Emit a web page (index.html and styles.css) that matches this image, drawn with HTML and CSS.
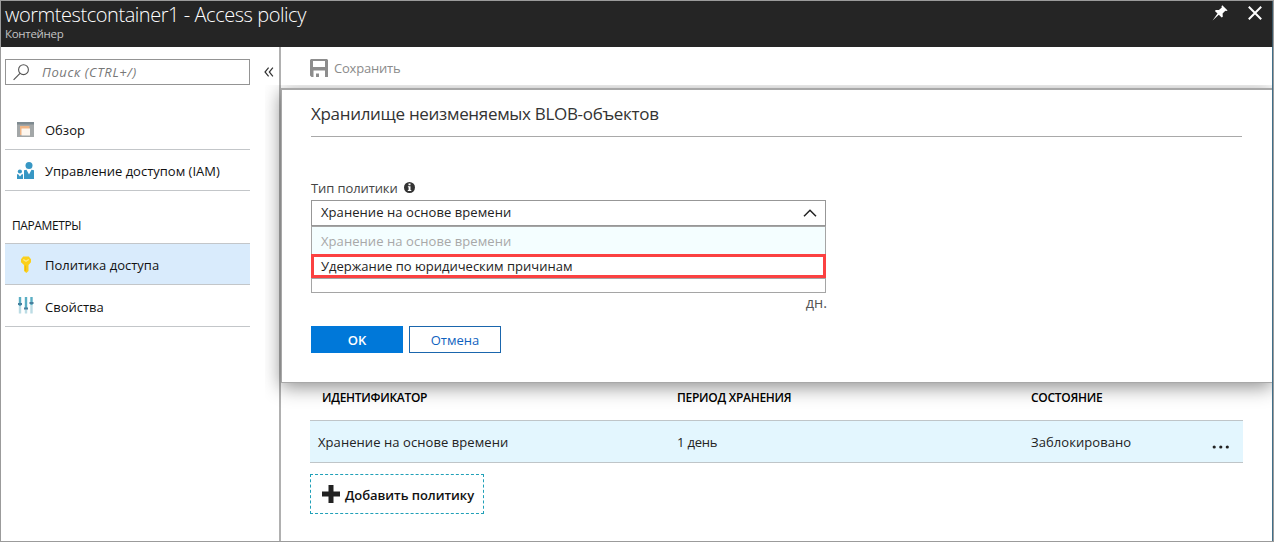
FILE: index.html
```
<!DOCTYPE html>
<html lang="ru">
<head>
<meta charset="utf-8">
<title>wormtestcontainer1 - Access policy</title>
<link rel="stylesheet" href="styles.css">
</head>
<body>
<div class="blade">
  <header class="blade-header">
    <div class="heading">
      <h1 class="blade-title">wormtestcontainer1 - Access policy</h1>
      <div class="blade-subtitle">Контейнер</div>
    </div>
    <div class="window-actions">
      <svg class="pin" width="16" height="16" viewBox="0 0 16 16"><path fill="#fff" d="M10.3 .3 15.6 5.4 14.3 6 13.3 5.7 10.6 8.5 10.8 11.8 9.7 12.4 6.8 9.8 .6 15.4 5.5 8.5 2.9 5.9 3.8 4.9 6.9 5.1 9.8 2.4 9.5 1.2Z"/></svg>
      <svg class="close" width="14" height="14" viewBox="0 0 14 14"><path d="M.8 .8 13.2 13.2M13.2 .8 .8 13.2" stroke="#fff" stroke-width="2" fill="none"/></svg>
    </div>
  </header>
  <div class="blade-body">
    <nav class="sidebar">
      <div class="search-row">
        <div class="search">
          <svg width="17" height="17" viewBox="0 0 17 17"><circle cx="10.5" cy="5.7" r="4.9" fill="none" stroke="#555" stroke-width="1.1"/><path d="M7 9.3 .6 15.8" stroke="#555" stroke-width="1.2"/></svg>
          <span>Поиск (CTRL+/)</span>
        </div>
        <svg class="collapse" width="10" height="10" viewBox="0 0 10 10"><path d="M4.6 .6 1 5l3.6 4.4M8.9 .6 5.3 5l3.6 4.4" stroke="#333" stroke-width="1.2" fill="none"/></svg>
      </div>
      <ul class="menu menu-top">
        <li class="menu-item">
          <svg width="17" height="15" viewBox="0 0 17 15"><path fill="#a3a7a8" d="M0 0h17v15H0z"/><path fill="#7e8a90" d="M0 0h17v2.5H0z"/><path fill="#f0b585" d="M3 4h9.500v9H3z"/><path fill="#fdf6ee" d="M4.500 6.500H13V13.500H4.500z"/></svg>
          <span>Обзор</span>
        </li>
        <li class="menu-item">
          <svg width="17" height="17" viewBox="0 0 17 17"><g fill="#3797c4"><circle cx="12" cy="3.600" r="3.500"/><path d="M7 8.200 9.500 7.800 12 12.500l2.500-4.700L17 8.200V17H7z"/><circle cx="2.900" cy="9.500" r="2.100"/><path d="M0 12.200h1.200l1.800 2.400 1.800-2.400H6V17H0z"/></g></svg>
          <span>Управление доступом (IAM)</span>
        </li>
      </ul>
      <div class="menu-caption">ПАРАМЕТРЫ</div>
      <ul class="menu menu-settings">
        <li class="menu-item selected">
          <svg width="17" height="17" viewBox="0 0 17 17"><path fill="#fbd01c" d="M6.200 .5h5.600l2.200 2.700v3L11.500 9v6L9.300 17 7 15V9L4 6.200v-3z"/><path d="M6.300 3.500 9 5.300l2.800-1.800" fill="none" stroke="#fae98d" stroke-width="1.300"/><path d="M8.600 9.500V15" stroke="#e2ae16" stroke-width=".8"/></svg>
          <span>Политика доступа</span>
        </li>
        <li class="menu-item">
          <svg width="17" height="17" viewBox="0 0 17 17"><g stroke-width="2.400"><path d="M3 0v9M9 0v12M14.500 0v8" stroke="#5aaec4"/><path d="M3 9v7.500M9 12v4.500M14.500 8v8.500" stroke="#bcdce4"/></g><path d="M1 7h4M7 11.500h4M12.500 6h4" stroke="#477f9c" stroke-width="2"/></svg>
          <span>Свойства</span>
        </li>
      </ul>
    </nav>
    <main class="content">
      <div class="toolbar">
        <svg width="18" height="18" viewBox="0 0 18 18"><path fill="#8d8d8d" fill-rule="evenodd" d="M1 0h16l1 1v17h-3v-6.500H3.500V18H1.500L0 16.500V1zM3 2v6h12V2z"/><path fill="#8d8d8d" d="M6 14.500h3V18H6z"/></svg>
        <span class="save">Сохранить</span>
      </div>
      <section class="dialog">
        <h2 class="dialog-title">Хранилище неизменяемых BLOB-объектов</h2>
        <div class="field-label">
          <span>Тип политики</span>
          <svg width="11" height="11" viewBox="0 0 11 11"><circle cx="5.500" cy="5.500" r="5.500" fill="#333"/><path d="M4.500 1.500h2v1.700h-2zM3.900 4.200h2.600v3.900h.8v1H3.800v-1h.8V5.200h-.7z" fill="#fff"/></svg>
        </div>
        <div class="select">
          <span class="value">Хранение на основе времени</span>
          <svg width="14" height="8" viewBox="0 0 14 8"><path d="M1 7.200 7 1.200l6 6" fill="none" stroke="#222" stroke-width="1.500"/></svg>
        </div>
        <div class="options">
          <div class="option disabled"><span class="value">Хранение на основе времени</span></div>
          <div class="option highlighted"><span>Удержание по юридическим причинам</span></div>
          <div class="option-rest"></div>
        </div>
        <div class="unit">дн.</div>
        <div class="buttons">
          <button class="btn primary">OK</button>
          <button class="btn">Отмена</button>
        </div>
      </section>
      <div class="policies">
        <div class="policy-row policy-head">
          <div class="c-id">ИДЕНТИФИКАТОР</div>
          <div>ПЕРИОД ХРАНЕНИЯ</div>
          <div>СОСТОЯНИЕ</div>
        </div>
        <div class="policy-row policy-data">
          <div class="value">Хранение на основе времени</div>
          <div class="day">1 день</div>
          <div class="value">Заблокировано</div>
          <svg width="18" height="4" viewBox="0 0 18 4"><g fill="#222"><circle cx="2.200" cy="2" r="1.600"/><circle cx="8.800" cy="2" r="1.600"/><circle cx="15.300" cy="2" r="1.600"/></g></svg>
        </div>
        <button class="add">
          <svg width="18" height="18" viewBox="0 0 18 18"><path d="M9 0v18M0 9h18" stroke="#222" stroke-width="5"/></svg>
          <span>Добавить политику</span>
        </button>
      </div>
    </main>
  </div>
</div>
</body>
</html>
```
FILE: styles.css
```
* { box-sizing: border-box; }
body { margin: 0; font: 13px/18px "Open Sans", "Noto Sans", sans-serif; color: #222; background: #fff; }
h1, h2, ul { margin: 0; padding: 0; font-weight: 400; list-style: none; }
button { font: inherit; padding: 0; margin: 0; background: #fff; color: inherit; }
span { white-space: nowrap; }
svg { flex: none; display: block; }

.blade { width: 1274px; height: 542px; border: 1px solid #9b9b9b; display: flex; flex-direction: column; overflow: hidden; }
.blade-header { height: 46px; flex: none; background: #252525; color: #fff; display: flex; justify-content: space-between; border-right: 1px solid #3b5766; }
.heading { padding-left: 4px; }
.blade-title { font-size: 20px; line-height: 27px; font-weight: 300; letter-spacing: -.45px; }
.blade-subtitle { font-size: 11.5px; line-height: 12px; letter-spacing: -.3px; color: #c4c4c4; }
.window-actions { display: flex; gap: 20px; padding: 4px 10px 0 0; }
.close { margin-top: 1px; }

.blade-body { flex: 1; display: flex; border-right: 1px solid #3f6f8a; }
.sidebar { width: 280px; flex: none; padding-left: 4px; border-right: 2px solid #b0b0b0; }
.search-row { display: flex; align-items: center; gap: 14px; padding-top: 12px; }
.search { width: 245px; height: 26px; border: 1px solid #949494; display: flex; align-items: center; gap: 12px; padding-left: 7px; color: #777; font-style: italic; letter-spacing: .6px; }
.menu-item { height: 41px; width: 245px; display: flex; align-items: center; gap: 11px; padding-left: 12px; border-bottom: 1px solid #c3c6c9; color: #111; }
.menu-item span { padding-top: 2px; }
.menu-top { padding-top: 24px; }
.menu-caption { height: 52px; padding: 26px 0 0 7px; color: #111; font-size: 12px; letter-spacing: -.4px; }
.menu-settings .menu-item { height: 42px; }
.menu-settings .selected { background: #d9ebfc; border-top: 1px solid #c3c6c9; }

.content { flex: 1; min-width: 0; display: flex; flex-direction: column; }
.toolbar { height: 41px; flex: none; display: flex; align-items: center; gap: 6px; padding-left: 29px; color: #8b8b8b; }
.save { letter-spacing: -.2px; }
.dialog { position: relative; z-index: 1; height: 295px; flex: none; background: #fff; border: solid #a8a8a8; border-width: 2px 0 1px 1px; box-shadow: 0 4px 18px rgba(0, 0, 0, .45); padding: 0 30px 0 29px; clip-path: inset(-3px 0 -40px -16px); }
.dialog-title { height: 47px; border-bottom: 1px solid #a9a9a9; font-size: 17px; line-height: 48px; letter-spacing: -.31px; color: #333; }
.field-label { display: flex; align-items: center; gap: 6px; padding-top: 38px; height: 63px; color: #444; letter-spacing: -.1px; }
.select { width: 515px; height: 26px; border: 1px solid #979797; display: flex; align-items: center; justify-content: space-between; padding: 0 8px 0 9px; color: #222; }
.select span { padding-bottom: 2px; }
.value { letter-spacing: .07px; }
.options { width: 515px; height: 67px; border: 1px solid #a5a5a5; }
.option { height: 27px; padding-left: 9px; display: flex; align-items: center; }
.disabled { background: #f4feff; color: #a8a8a8; }
.highlighted { height: 24px; margin: 0 -1px; border: 3px solid #fb4141; padding-left: 7px; color: #222; }
.option-rest { border-top: 1px solid #a5a5a5; }
.unit { width: 516px; text-align: right; line-height: 20px; font-size: 14.5px; color: #555; }
.buttons { display: flex; gap: 6px; padding-top: 13px; }
.btn { width: 92px; height: 27px; border: 1px solid #1a66ad; color: #0f62c0; font-weight: 500; }
.primary { background: #0078d9; border-color: #0078d9; color: #fff; font-weight: 600; }

.policies { padding: 0 29px; display: flex; flex-direction: column; align-items: flex-start; }
.policy-row { width: 933px; display: grid; grid-template-columns: 359px 354px 181px 18px; padding-left: 8px; align-items: center; }
.policy-head { height: 37px; font-size: 12px; font-weight: 600; letter-spacing: -.28px; color: #000; padding-bottom: 7px; }
.c-id { padding-left: 4px; }
.day { letter-spacing: -.2px; }
.policy-data { height: 43px; background: #e3f6fe; border-top: 1px solid #bfc5c8; border-bottom: 1px solid #bfc5c8; }
.policy-data svg { margin-top: 11px; }
.add { width: 174px; height: 40px; margin-top: 11px; border: 1px dashed #20a0b8; display: flex; align-items: center; gap: 5px; padding-left: 11px; font-weight: 600; letter-spacing: -.06px; color: #111; }
.add span { padding-top: 2px; }
```
